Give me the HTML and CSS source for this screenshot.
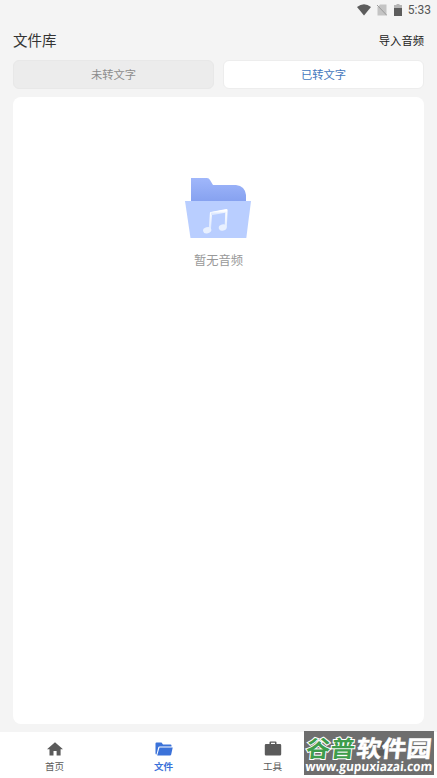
FILE: index.html
```html
<!DOCTYPE html>
<html lang="zh-CN">
<head>
<meta charset="utf-8">
<title>文件库</title>
<link rel="stylesheet" href="styles.css">
</head>
<body>
<div class="app">
  <div class="status">
    <svg width="14" height="12" viewBox="0 0 14 12"><path fill="#5c5c5c" d="M0 3Q7-2.500 14 3L7 11.500Z"/></svg>
    <svg class="sim" width="10" height="12" viewBox="0 0 10 12"><path fill="#c4c4c4" d="M3 .5h6.500v11H.5V3.500Z"/><path stroke="#999" d="M0 1l10 10.500"/></svg>
    <svg class="battery" width="8" height="12" viewBox="0 0 8 12"><path fill="#b5b5b5" d="M2.500 0h3v1H8v4H0V1h2.500Z"/><path fill="#5c5c5c" d="M0 4h8v8H0Z"/></svg>
    <span>5:33</span>
  </div>
  <header class="header"><h1>文件库</h1><span class="import">导入音频</span></header>
  <div class="tabs"><div class="tab">未转文字</div><div class="tab active">已转文字</div></div>
  <main class="panel">
    <svg class="folder" width="66" height="62" viewBox="0 0 66 62">
      <defs>
        <linearGradient id="back" x1="0" y1="0" x2="0" y2="1"><stop offset="0" stop-color="#a0b7fb"/><stop offset="1" stop-color="#829eee"/></linearGradient>
        <linearGradient id="note" x1="0" y1="0" x2="0" y2="1"><stop offset="0" stop-color="#fff"/><stop offset="1" stop-color="#dce8ff"/></linearGradient>
      </defs>
      <path fill="url(#back)" d="M6 1h16q2 0 3 2l3 5h23q9 1 10 10v10H6Z"/>
      <path fill="#b9ceff" d="M0 24h66l-4.700 37H5.500Z"/>
      <g fill="none" stroke="url(#note)" stroke-width="2.200" stroke-linejoin="round"><path d="M24.800 53l1.200-17 15.500-2.800-.8 17.300"/><path stroke-width="3.200" d="M26 36.800l15.500-2.800"/></g>
      <g fill="#e8f0ff"><ellipse cx="22.200" cy="53.200" rx="4.200" ry="3.100" transform="rotate(-15 22.200 53.200)"/><ellipse cx="37.700" cy="50.500" rx="4" ry="3.100" transform="rotate(-15 37.700 50.500)"/></g>
    </svg>
    <p>暂无音频</p>
  </main>
  <nav class="nav">
    <div class="item"><svg width="18" height="18" viewBox="0 0 18 18"><path fill="#5b5b5b" d="M9 2.200L17 9.300h-2.400V15.500h-4V11H7.500v4.500h-4V9.300H1Z"/></svg><span>首页</span></div>
    <div class="item current"><svg width="20" height="18" viewBox="0 0 20 18"><path fill="#3b72d9" d="M1.500 3.500q0-1 1-1h5l1.500 2h7.500q1 0 1 1V6.500H5.500q-1 0-1.300 1L2.500 14.500q-1 0-1-1Z"/><path fill="#3b72d9" d="M5.500 7.500h13.200l-1.500 7q-.2 1-1.200 1H3.200Z"/></svg><span>文件</span></div>
    <div class="item"><svg width="18" height="18" viewBox="0 0 18 18"><path fill="#5b5b5b" fill-rule="evenodd" d="M5.500 4V2.500q0-1 1-1h5q1 0 1 1V4H16q1.200 0 1.200 1.200v9.100q0 1.200-1.200 1.200H2q-1.200 0-1.200-1.200V5.200Q.8 4 2 4ZM7 4h4V2.800H7Z"/></svg><span>工具</span></div>
    <div class="item"><svg width="18" height="18" viewBox="0 0 18 18"><circle cx="9" cy="5" r="3.500" fill="#5b5b5b"/><path fill="#5b5b5b" d="M2 15.500q0-6 7-6t7 6Z"/></svg></div>
  </nav>
  <div class="watermark">
    <svg width="130" height="44" viewBox="0 0 130 44">
      <g transform="skewX(-6)" class="brand">
        <text class="green" x="4" y="26" textLength="49" lengthAdjust="spacingAndGlyphs">谷普</text>
        <text class="white" x="54.500" y="26" textLength="75" lengthAdjust="spacingAndGlyphs">软件园</text>
      </g>
      <text class="url" transform="skewX(-5)" x="4.500" y="40.300" textLength="127" lengthAdjust="spacingAndGlyphs">www.gupuxiazai.com</text>
    </svg>
  </div>
</div>
</body>
</html>
```
FILE: styles.css
```css
* { box-sizing: border-box; }
body { margin: 0; background: #f4f4f4; font-family: "Noto Sans", "Noto Sans CJK SC", sans-serif; }
svg { display: block; flex: none; }
.app { position: relative; display: flex; flex-direction: column; width: 437px; height: 778px; overflow: hidden; }
.status { display: flex; justify-content: flex-end; align-items: center; height: 19px; padding-right: 6px; font: 400 12px/19px Roboto, sans-serif; color: #555; }
.status span { padding-top: 1px; }
.status .sim { margin-left: 6px; }
.status .battery { margin: 0 6px 0 7px; }
.header { display: flex; justify-content: space-between; align-items: center; height: 41px; padding: 0 13px; color: #333; }
.header h1 { margin: 0; font: 400 14.5px/41px "Noto Sans CJK SC", sans-serif; }
.import { font: 400 11.3px/40px "Noto Sans CJK SC", sans-serif; color: #222; }
.tabs { display: flex; gap: 9px; height: 29px; padding: 0 13px; }
.tab { flex: 1; border: 1px solid #e8e8e8; border-radius: 6px; background: #ececec; color: #8c8c8c; font: 400 11.3px/27px "Noto Sans CJK SC", sans-serif; text-align: center; }
.tab.active { background: #fff; border-color: #ededed; color: #4377bd; }
.panel { display: flex; flex-direction: column; align-items: center; flex: 1; margin: 8px 13px; padding-top: 80px; border-radius: 8px; background: #fff; }
.folder { margin-right: 1.500px; }
.panel p { margin: 11px 0 0; color: #999; font: 400 12.3px/20px "Noto Sans CJK SC", sans-serif; }
.nav { display: flex; height: 46px; background: #fff; }
.item { display: flex; flex-direction: column; align-items: center; width: 109px; padding-top: 8px; color: #5b5b5b; font: 400 9.6px/16px "Noto Sans CJK SC", sans-serif; }
.item.current { color: #3b72d9; font-weight: 700; }
.watermark { position: absolute; left: 304px; top: 731px; width: 130px; height: 44px; background: rgba(90, 90, 90, .88); }
.brand { font: 700 23px "Noto Sans CJK SC", sans-serif; }
.green { fill: #3e9d4c; stroke: #fff; stroke-width: 2px; paint-order: stroke; }
.white { fill: #fff; stroke: #fff; stroke-width: .5px; }
.url { fill: #fff; font: 700 13px "Open Sans", sans-serif; }
```
